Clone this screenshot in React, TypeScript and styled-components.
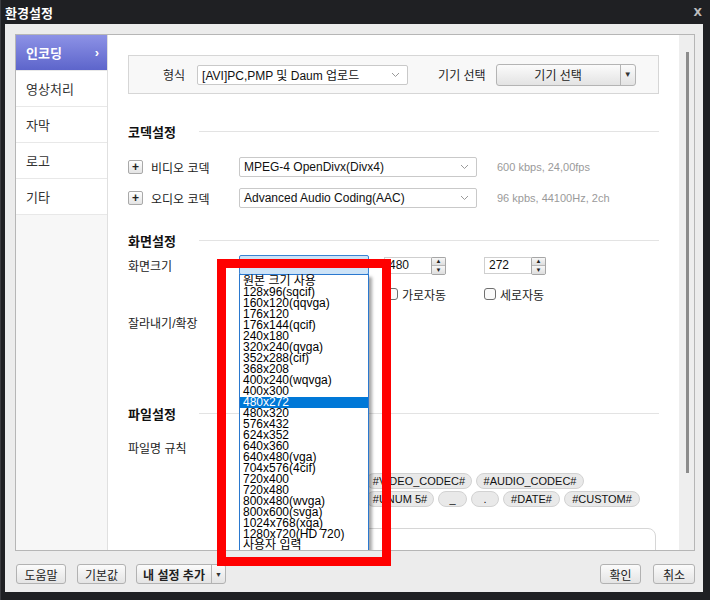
import React from "react";
import styled, { createGlobalStyle } from "styled-components";

const GlobalStyle = createGlobalStyle`
  html, body { margin: 0; padding: 0; background: #1f2023; }
  body {
    font-family: "Liberation Sans", "Noto Sans CJK KR", sans-serif;
    font-size: 12px;
    color: #222;
  }
  * { box-sizing: border-box; }
`;

const Window = styled.div`
  position: relative;
  width: 710px;
  height: 600px;
  background: #1f2023;
  border-left: 1px solid #3b3c40;
  display: flex;
  flex-direction: column;
  overflow: hidden;
`;

const TitleBar = styled.div`
  height: 24px;
  display: flex;
  align-items: center;
  justify-content: space-between;
  padding: 0 8px 0 4px;
  color: #fff;
  font-weight: bold;
  font-size: 13px;
`;

const CloseX = styled.span`
  color: #bdbdbd;
  font-size: 11px;
  font-weight: bold;
  font-family: "DejaVu Sans", sans-serif;
`;

const Inner = styled.div`
  flex: 1;
  margin: 0 7px 8px 4px;
  background: #ececec;
  padding: 10px 8px 0 10px;
  display: flex;
  flex-direction: column;
`;

const MainBox = styled.div`
  height: 517px;
  border: 1px solid #b6b6b6;
  display: flex;
  background: #fff;
`;

const Sidebar = styled.div`
  width: 92px;
  background: #f7f7f7;
  border-right: 1px solid #e0e0e0;
  display: flex;
  flex-direction: column;
`;

const NavItem = styled.div<{ $active?: boolean }>`
  height: 36px;
  display: flex;
  align-items: center;
  justify-content: space-between;
  padding: 0 8px 0 10px;
  font-size: 13px;
  border-bottom: 1px solid #e8e8e8;
  background: ${(p) => (p.$active ? "linear-gradient(#8d92e6, #5d65cb)" : "#fff")};
  color: ${(p) => (p.$active ? "#fff" : "#333")};
  font-weight: ${(p) => (p.$active ? "bold" : "normal")};
`;

const Content = styled.div`
  flex: 1;
  position: relative;
  overflow: hidden;
  padding: 20px 20px 0 20px;
`;

const ScrollTrack = styled.div`
  width: 15px;
  background: #eeeeee;
  padding-top: 17px;
  display: flex;
  justify-content: center;
`;

const ScrollThumb = styled.div`
  width: 3px;
  height: 421px;
  margin-left: 1px;
  background: #8c8c8c;
`;

const TopBox = styled.div`
  height: 39px;
  border: 1px solid #d6d6d6;
  background: #f8f8f8;
  display: flex;
  align-items: center;
  padding-left: 34px;
`;

const Label = styled.span<{ $ml?: number }>`
  margin-left: ${(p) => p.$ml ?? 0}px;
  color: #222;
  white-space: nowrap;
`;

const Select = styled.div<{ $w: number; $focus?: boolean }>`
  position: relative;
  width: ${(p) => p.$w}px;
  height: 20px;
  border: 1px solid ${(p) => (p.$focus ? "#3a83d3" : "#c9c9c9")};
  border-radius: 2px;
  background: ${(p) => (p.$focus ? "#cde3f7" : "#fff")};
  display: flex;
  align-items: center;
  justify-content: space-between;
  padding: 0 7px 0 4px;
  color: #111;
  white-space: nowrap;
`;

const DeviceButton = styled.div`
  width: 140px;
  height: 22px;
  margin-left: 10px;
  border: 1px solid #b4b4b4;
  border-radius: 3px;
  background: linear-gradient(#fbfbfb, #e3e3e3);
  display: flex;
`;

const DeviceText = styled.div`
  flex: 1;
  display: flex;
  align-items: center;
  justify-content: center;
`;

const ArrowPart = styled.div`
  width: 15px;
  border-left: 1px solid #b4b4b4;
  display: flex;
  align-items: center;
  justify-content: center;
  font-size: 8px;
  color: #333;
`;

const SectionHeader = styled.div<{ $mt: number }>`
  margin-top: ${(p) => p.$mt}px;
  height: 16px;
  display: flex;
  align-items: center;
`;

const SectionTitle = styled.div`
  width: 71px;
  font-weight: bold;
  font-size: 13px;
  color: #111;
`;

const SectionLine = styled.div`
  flex: 1;
  height: 1px;
  background: #e3e3e3;
`;

const Row = styled.div<{ $mt: number }>`
  margin-top: ${(p) => p.$mt}px;
  height: 20px;
  display: flex;
  align-items: center;
`;

const LabelCell = styled.div`
  width: 111px;
  display: flex;
  align-items: center;
`;

const PlusButton = styled.div`
  width: 15px;
  height: 14px;
  margin-right: 8px;
  border: 1px solid #a9a9a9;
  border-radius: 2px;
  background: linear-gradient(#fff, #e4e4e4);
  display: flex;
  align-items: center;
  justify-content: center;
  font-weight: bold;
  font-size: 12px;
  line-height: 1;
  color: #222;
`;

const Info = styled.span`
  margin-left: 20px;
  color: #9a9a9a;
  font-size: 11px;
`;

const SpinBox = styled.div<{ $ml: number }>`
  margin-left: ${(p) => p.$ml}px;
  width: 62px;
  height: 17px;
  display: flex;
  border: 1px solid #cfcfcf;
  border-right: none;
  background: #fff;
`;

const SpinValue = styled.div`
  flex: 1;
  padding-left: 4px;
  display: flex;
  align-items: center;
  color: #111;
`;

const SpinButtons = styled.div`
  width: 15px;
  display: flex;
  flex-direction: column;
  border: 1px solid #a6a6a6;
  border-radius: 2px;
  margin-top: -1px;
  height: 18px;
`;

const SpinHalf = styled.div`
  flex: 1;
  background: linear-gradient(#f7f7f7, #dedede);
  display: flex;
  align-items: center;
  justify-content: center;
  font-size: 6px;
  line-height: 1;
  color: #222;
  & + & {
    border-top: 1px solid #b8b8b8;
  }
`;

const CheckItem = styled.div<{ $ml?: number }>`
  margin-left: ${(p) => p.$ml ?? 0}px;
  width: 98px;
  display: flex;
  align-items: center;
`;

const CheckBox = styled.div`
  width: 12px;
  height: 12px;
  border: 1px solid #6f6f6f;
  border-radius: 3px;
  background: #fafafa;
  margin-right: 4px;
`;

const ChipRow = styled.div<{ $mt: number }>`
  margin-top: ${(p) => p.$mt}px;
  margin-left: 111px;
  display: flex;
  gap: 4px;
  height: 16px;
`;

const Chip = styled.div<{ $w?: number }>`
  ${(p) => (p.$w ? `width: ${p.$w}px;` : "")}
  flex-shrink: 0;
  height: 16px;
  padding: 0 6px;
  overflow: hidden;
  border: 1px solid #d2d2d2;
  border-radius: 8px;
  background: #e9e9e9;
  display: flex;
  align-items: center;
  justify-content: center;
  font-size: 11px;
  color: #111;
  white-space: nowrap;
`;

const RuleBox = styled.div`
  margin-top: 21px;
  margin-left: 111px;
  margin-right: 3px;
  height: 60px;
  border: 1px solid #d6d6d6;
  border-radius: 8px 8px 0 0;
`;

const DropList = styled.div`
  position: absolute;
  left: -1px;
  top: 18px;
  width: 130px;
  height: 278px;
  border: 1px solid #2a78cf;
  background: #fff;
  padding-top: 1px;
  box-shadow: 3px 3px 3px rgba(0, 0, 0, 0.35);
  z-index: 5;
`;

const ListItem = styled.div<{ $sel?: boolean }>`
  height: 11px;
  line-height: 11px;
  padding-left: 3px;
  font-size: 12px;
  white-space: nowrap;
  color: ${(p) => (p.$sel ? "#fff" : "#000")};
  background: ${(p) => (p.$sel ? "#0078d7" : "transparent")};
`;

const Footer = styled.div`
  padding-top: 13px;
  display: flex;
  align-items: flex-start;
`;

const FootButton = styled.div<{ $w: number; $ml?: number; $bold?: boolean }>`
  width: ${(p) => p.$w}px;
  margin-left: ${(p) => p.$ml ?? 0}px;
  height: 20px;
  border: 1px solid #b2b2b2;
  border-radius: 3px;
  background: linear-gradient(#fbfbfb, #e4e4e4);
  display: flex;
  align-items: center;
  justify-content: center;
  font-weight: ${(p) => (p.$bold ? "bold" : "normal")};
  color: #222;
`;

const SplitButton = styled.div`
  width: 90px;
  margin-left: 10px;
  height: 20px;
  border: 1px solid #b2b2b2;
  border-radius: 3px;
  background: linear-gradient(#fbfbfb, #e4e4e4);
  display: flex;
  font-weight: bold;
`;

const Spacer = styled.div`
  flex: 1;
`;

const Annotation = styled.div`
  position: absolute;
  left: 216px;
  top: 259px;
  width: 174px;
  height: 307px;
  border: 9px solid #ff0000;
  z-index: 10;
`;

const Chevron = () => (
  <svg width="9" height="6" viewBox="0 0 9 6">
    <path d="M1 1 L4.5 4.5 L8 1" fill="none" stroke="#9a9a9a" strokeWidth="1" />
  </svg>
);

const sizes = [
  "원본 크기 사용",
  "128x96(sqcif)",
  "160x120(qqvga)",
  "176x120",
  "176x144(qcif)",
  "240x180",
  "320x240(qvga)",
  "352x288(cif)",
  "368x208",
  "400x240(wqvga)",
  "400x300",
  "480x272",
  "480x320",
  "576x432",
  "624x352",
  "640x360",
  "640x480(vga)",
  "704x576(4cif)",
  "720x400",
  "720x480",
  "800x480(wvga)",
  "800x600(svga)",
  "1024x768(xga)",
  "1280x720(HD 720)",
  "사용자 입력",
];

const navItems = ["인코딩", "영상처리", "자막", "로고", "기타"];

function Spin({ value, ml }: { value: string; ml: number }) {
  return (
    <SpinBox $ml={ml}>
      <SpinValue>{value}</SpinValue>
      <SpinButtons>
        <SpinHalf>▲</SpinHalf>
        <SpinHalf>▼</SpinHalf>
      </SpinButtons>
    </SpinBox>
  );
}

export default function App() {
  return (
    <>
      <GlobalStyle />
      <Window>
        <TitleBar>
          <span>환경설정</span>
          <CloseX>X</CloseX>
        </TitleBar>
        <Inner>
          <MainBox>
            <Sidebar>
              {navItems.map((n, i) => (
                <NavItem key={n} $active={i === 0}>
                  <span>{n}</span>
                  {i === 0 && <span>›</span>}
                </NavItem>
              ))}
            </Sidebar>
            <Content>
              <TopBox>
                <Label>형식</Label>
                <Select $w={211} style={{ marginLeft: 12 }}>
                  <span>[AVI]PC,PMP 및 Daum 업로드</span>
                  <Chevron />
                </Select>
                <Label $ml={30}>기기 선택</Label>
                <DeviceButton>
                  <DeviceText>기기 선택</DeviceText>
                  <ArrowPart>▼</ArrowPart>
                </DeviceButton>
              </TopBox>

              <SectionHeader $mt={29}>
                <SectionTitle>코덱설정</SectionTitle>
                <SectionLine />
              </SectionHeader>
              <Row $mt={18}>
                <LabelCell>
                  <PlusButton>+</PlusButton>
                  <Label>비디오 코덱</Label>
                </LabelCell>
                <Select $w={238}>
                  <span>MPEG-4 OpenDivx(Divx4)</span>
                  <Chevron />
                </Select>
                <Info>600 kbps, 24,00fps</Info>
              </Row>
              <Row $mt={11}>
                <LabelCell>
                  <PlusButton>+</PlusButton>
                  <Label>오디오 코덱</Label>
                </LabelCell>
                <Select $w={238}>
                  <span>Advanced Audio Coding(AAC)</span>
                  <Chevron />
                </Select>
                <Info>96 kpbs, 44100Hz, 2ch</Info>
              </Row>

              <SectionHeader $mt={24}>
                <SectionTitle>화면설정</SectionTitle>
                <SectionLine />
              </SectionHeader>
              <Row $mt={7}>
                <LabelCell>
                  <Label>화면크기</Label>
                </LabelCell>
                <Select $w={130} $focus>
                  <span />
                  <DropList>
                    {sizes.map((s) => (
                      <ListItem key={s} $sel={s === "480x272"}>
                        {s}
                      </ListItem>
                    ))}
                  </DropList>
                </Select>
                <Spin value="480" ml={15} />
                <Spin value="272" ml={38} />
              </Row>
              <Row $mt={9}>
                <LabelCell />
                <CheckItem $ml={147}>
                  <CheckBox />
                  <Label>가로자동</Label>
                </CheckItem>
                <CheckItem>
                  <CheckBox />
                  <Label>세로자동</Label>
                </CheckItem>
              </Row>
              <Row $mt={8}>
                <LabelCell>
                  <Label>잘라내기/확장</Label>
                </LabelCell>
              </Row>

              <SectionHeader $mt={73}>
                <SectionTitle>파일설정</SectionTitle>
                <SectionLine />
              </SectionHeader>
              <Row $mt={16}>
                <LabelCell>
                  <Label>파일명 규칙</Label>
                </LabelCell>
              </Row>
              {/* the first chips of each row sit under the open list */}
              <ChipRow $mt={16}>
                <Chip $w={60} />
                <Chip $w={59} />
                <Chip $w={106}>#VIDEO_CODEC#</Chip>
                <Chip $w={108}>#AUDIO_CODEC#</Chip>
              </ChipRow>
              <ChipRow $mt={2}>
                <Chip $w={60} />
                <Chip $w={59} />
                <Chip $w={68}>#UNUM 5#</Chip>
                <Chip $w={29}>_</Chip>
                <Chip $w={28}>.</Chip>
                <Chip $w={57}>#DATE#</Chip>
                <Chip $w={76}>#CUSTOM#</Chip>
              </ChipRow>
              <RuleBox />
            </Content>
            <ScrollTrack>
              <ScrollThumb />
            </ScrollTrack>
          </MainBox>
          <Footer>
            <FootButton $w={50} $ml={1}>도움말</FootButton>
            <FootButton $w={49} $ml={11}>기본값</FootButton>
            <SplitButton>
              <DeviceText>내 설정 추가</DeviceText>
              <ArrowPart style={{ width: 14, fontSize: 7 }}>▼</ArrowPart>
            </SplitButton>
            <Spacer />
            <FootButton $w={41}>확인</FootButton>
            <FootButton $w={42} $ml={12}>취소</FootButton>
          </Footer>
        </Inner>
        <Annotation />
      </Window>
    </>
  );
}
